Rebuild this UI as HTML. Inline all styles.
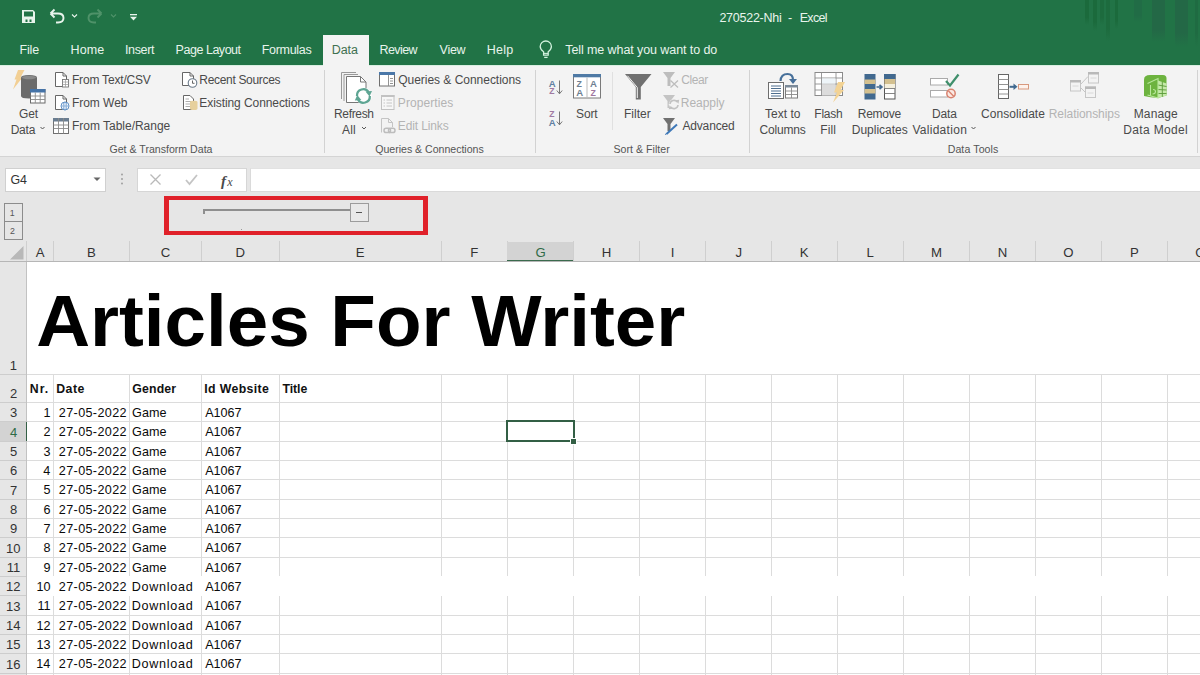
<!DOCTYPE html>
<html><head><meta charset="utf-8">
<style>
*{margin:0;padding:0}
html,body{width:1200px;height:675px;overflow:hidden;background:#fff;font-family:"Liberation Sans",sans-serif}
.a{position:absolute}
.t{position:absolute;white-space:nowrap}
</style></head><body>
<div class="a" style="left:0px;top:0px;width:1200px;height:65px;background:#217346;"></div>
<div class="a" style="left:1085px;top:0px;width:3.5px;height:25px;background:linear-gradient(#1b6a3c 70%,#217346);"></div>
<div class="a" style="left:1092.7px;top:0px;width:4px;height:31px;background:linear-gradient(#1b6a3c 70%,#217346);"></div>
<div class="a" style="left:1100px;top:0px;width:3.6px;height:25px;background:linear-gradient(#1d6b3e 70%,#217346);"></div>
<div class="a" style="left:1106.3px;top:0px;width:3.6px;height:41px;background:linear-gradient(#1d6b3e 70%,#217346);"></div>
<div class="a" style="left:1114.6px;top:0px;width:3.6px;height:29px;background:linear-gradient(#1b6a3c 70%,#217346);"></div>
<div class="a" style="left:1133.5px;top:0px;width:8px;height:22px;background:linear-gradient(#216c46 70%,#217346);"></div>
<div class="a" style="left:1152px;top:0px;width:12.6px;height:42px;background:linear-gradient(#236846 70%,#217346);"></div>
<div class="a" style="left:1175px;top:0px;width:12.5px;height:47px;background:linear-gradient(#236846 70%,#217346);"></div>
<div class="a" style="left:1194.8px;top:0px;width:3.6px;height:47px;background:linear-gradient(#1f6b42 70%,#217346);"></div>
<div class="t" style="left:719.38px;top:12.00px;font-size:12.50px;line-height:12.50px;color:#e8f4ec;letter-spacing:-0.250px;">270522-Nhi</div>
<div class="t" style="left:788.00px;top:12.00px;font-size:12.50px;line-height:12.50px;color:#e8f4ec;">-</div>
<div class="t" style="left:799.70px;top:12.00px;font-size:12.50px;line-height:12.50px;color:#e8f4ec;letter-spacing:-0.663px;">Excel</div>
<div class="a" style="left:323px;top:35px;width:46px;height:30px;background:#f3f3f3;"></div>
<div class="t" style="left:19.40px;top:44.00px;font-size:12.50px;line-height:12.50px;color:#e8f4ec;letter-spacing:-0.142px;">File</div>
<div class="t" style="left:70.60px;top:44.00px;font-size:12.50px;line-height:12.50px;color:#e8f4ec;letter-spacing:0.083px;">Home</div>
<div class="t" style="left:124.88px;top:44.00px;font-size:12.50px;line-height:12.50px;color:#e8f4ec;letter-spacing:-0.320px;">Insert</div>
<div class="t" style="left:175.60px;top:44.00px;font-size:12.50px;line-height:12.50px;color:#e8f4ec;letter-spacing:-0.472px;">Page Layout</div>
<div class="t" style="left:261.80px;top:44.00px;font-size:12.50px;line-height:12.50px;color:#e8f4ec;letter-spacing:-0.318px;">Formulas</div>
<div class="t" style="left:379.50px;top:44.00px;font-size:12.50px;line-height:12.50px;color:#e8f4ec;letter-spacing:-0.580px;">Review</div>
<div class="t" style="left:439.57px;top:44.00px;font-size:12.50px;line-height:12.50px;color:#e8f4ec;letter-spacing:-0.283px;">View</div>
<div class="t" style="left:486.80px;top:44.00px;font-size:12.50px;line-height:12.50px;color:#e8f4ec;letter-spacing:0.250px;">Help</div>
<div class="t" style="left:565.25px;top:44.00px;font-size:12.50px;line-height:12.50px;color:#e8f4ec;letter-spacing:-0.088px;">Tell me what you want to do</div>
<div class="t" style="left:331.80px;top:44.00px;font-size:12.50px;line-height:12.50px;color:#3f7050;letter-spacing:-0.100px;">Data</div>
<div class="a" style="left:0px;top:65px;width:1200px;height:92px;background:#f3f3f3;"></div>
<div class="a" style="left:0px;top:65px;width:323px;height:1px;background:#d9eee1;"></div>
<div class="a" style="left:369px;top:65px;width:831px;height:1px;background:#d9eee1;"></div>
<div class="a" style="left:0px;top:156px;width:1200px;height:1px;background:#d4d4d4;"></div>
<div class="a" style="left:324px;top:70px;width:1px;height:83px;background:#d2d2d2;"></div>
<div class="a" style="left:535px;top:70px;width:1px;height:83px;background:#d2d2d2;"></div>
<div class="a" style="left:749px;top:70px;width:1px;height:83px;background:#d2d2d2;"></div>
<div class="a" style="left:1197px;top:70px;width:1px;height:83px;background:#d2d2d2;"></div>
<div class="a" style="left:612px;top:72px;width:1px;height:58px;background:#e0e0e0;"></div>
<div class="t" style="left:18.90px;top:108.00px;font-size:12.00px;line-height:12.00px;color:#4a4a4a;letter-spacing:-0.050px;">Get</div>
<div class="t" style="left:10.64px;top:124.00px;font-size:12.00px;line-height:12.00px;color:#4a4a4a;letter-spacing:-0.193px;">Data</div>
<div class="t" style="left:71.94px;top:74.00px;font-size:12.00px;line-height:12.00px;color:#4a4a4a;letter-spacing:-0.187px;">From Text/CSV</div>
<div class="t" style="left:71.94px;top:97.00px;font-size:12.00px;line-height:12.00px;color:#4a4a4a;letter-spacing:-0.037px;">From Web</div>
<div class="t" style="left:71.94px;top:120.00px;font-size:12.00px;line-height:12.00px;color:#4a4a4a;letter-spacing:-0.011px;">From Table/Range</div>
<div class="t" style="left:199.34px;top:74.00px;font-size:12.00px;line-height:12.00px;color:#4a4a4a;letter-spacing:-0.322px;">Recent Sources</div>
<div class="t" style="left:199.34px;top:97.00px;font-size:12.00px;line-height:12.00px;color:#4a4a4a;letter-spacing:-0.081px;">Existing Connections</div>
<div class="t" style="left:109.47px;top:144.00px;font-size:10.60px;line-height:10.60px;color:#555;letter-spacing:-0.000px;">Get &amp; Transform Data</div>
<div class="t" style="left:334.04px;top:108.00px;font-size:12.00px;line-height:12.00px;color:#4a4a4a;letter-spacing:-0.337px;">Refresh</div>
<div class="t" style="left:342.00px;top:124.00px;font-size:12.00px;line-height:12.00px;color:#4a4a4a;letter-spacing:0.200px;">All</div>
<div class="t" style="left:398.20px;top:74.00px;font-size:12.00px;line-height:12.00px;color:#4a4a4a;letter-spacing:-0.024px;">Queries &amp; Connections</div>
<div class="t" style="left:397.84px;top:97.00px;font-size:12.00px;line-height:12.00px;color:#b4b4b4;letter-spacing:0.069px;">Properties</div>
<div class="t" style="left:397.84px;top:120.00px;font-size:12.00px;line-height:12.00px;color:#b4b4b4;letter-spacing:-0.127px;">Edit Links</div>
<div class="t" style="left:375.27px;top:144.00px;font-size:10.60px;line-height:10.60px;color:#555;letter-spacing:-0.026px;">Queries &amp; Connections</div>
<div class="t" style="left:576.10px;top:108.00px;font-size:12.00px;line-height:12.00px;color:#4a4a4a;letter-spacing:-0.187px;">Sort</div>
<div class="t" style="left:623.94px;top:108.00px;font-size:12.00px;line-height:12.00px;color:#4a4a4a;letter-spacing:0.028px;">Filter</div>
<div class="t" style="left:681.20px;top:74.00px;font-size:12.00px;line-height:12.00px;color:#b4b4b4;letter-spacing:-0.390px;">Clear</div>
<div class="t" style="left:680.84px;top:97.00px;font-size:12.00px;line-height:12.00px;color:#b4b4b4;letter-spacing:-0.047px;">Reapply</div>
<div class="t" style="left:682.40px;top:120.00px;font-size:12.00px;line-height:12.00px;color:#4a4a4a;letter-spacing:-0.151px;">Advanced</div>
<div class="t" style="left:613.47px;top:144.00px;font-size:10.60px;line-height:10.60px;color:#555;letter-spacing:0.031px;">Sort &amp; Filter</div>
<div class="t" style="left:765.06px;top:108.00px;font-size:12.00px;line-height:12.00px;color:#4a4a4a;letter-spacing:0.003px;">Text to</div>
<div class="t" style="left:759.40px;top:124.00px;font-size:12.00px;line-height:12.00px;color:#4a4a4a;letter-spacing:-0.170px;">Columns</div>
<div class="t" style="left:814.34px;top:108.00px;font-size:12.00px;line-height:12.00px;color:#4a4a4a;letter-spacing:-0.225px;">Flash</div>
<div class="t" style="left:820.34px;top:124.00px;font-size:12.00px;line-height:12.00px;color:#4a4a4a;letter-spacing:0.107px;">Fill</div>
<div class="t" style="left:857.74px;top:108.00px;font-size:12.00px;line-height:12.00px;color:#4a4a4a;letter-spacing:-0.240px;">Remove</div>
<div class="t" style="left:851.74px;top:124.00px;font-size:12.00px;line-height:12.00px;color:#4a4a4a;letter-spacing:-0.000px;">Duplicates</div>
<div class="t" style="left:932.04px;top:108.00px;font-size:12.00px;line-height:12.00px;color:#4a4a4a;letter-spacing:-0.160px;">Data</div>
<div class="t" style="left:912.38px;top:124.00px;font-size:12.00px;line-height:12.00px;color:#4a4a4a;letter-spacing:0.291px;">Validation</div>
<div class="t" style="left:981.10px;top:108.00px;font-size:12.00px;line-height:12.00px;color:#4a4a4a;letter-spacing:0.044px;">Consolidate</div>
<div class="t" style="left:1048.74px;top:108.00px;font-size:12.00px;line-height:12.00px;color:#b4b4b4;letter-spacing:-0.072px;">Relationships</div>
<div class="t" style="left:1133.74px;top:108.00px;font-size:12.00px;line-height:12.00px;color:#4a4a4a;letter-spacing:0.124px;">Manage</div>
<div class="t" style="left:1123.34px;top:124.00px;font-size:12.00px;line-height:12.00px;color:#4a4a4a;letter-spacing:0.340px;">Data Model</div>
<div class="t" style="left:947.65px;top:144.00px;font-size:10.60px;line-height:10.60px;color:#555;letter-spacing:0.094px;">Data Tools</div>
<div class="a" style="left:0px;top:157px;width:1200px;height:85px;background:#e6e6e6;"></div>
<div class="a" style="left:5px;top:168px;width:101px;height:24px;background:#fff;border:1px solid #d0d0d0;box-sizing:border-box"></div>
<div class="t" style="left:10.38px;top:174.00px;font-size:12.40px;line-height:12.40px;color:#333;">G4</div>
<div class="a" style="left:137px;top:168px;width:110px;height:24px;background:#fff;border:1px solid #d6d6d6;box-sizing:border-box"></div>
<div class="a" style="left:250px;top:168px;width:960px;height:24px;background:#fff;border:1px solid #dadada;border-top-color:#e2e2e2;box-sizing:border-box"></div>
<div class="a" style="left:4px;top:203px;width:19px;height:19px;background:#e6e6e6;border:1px solid #8c8c8c;box-sizing:border-box"></div>
<div class="a" style="left:4px;top:221px;width:19px;height:19px;background:#e6e6e6;border:1px solid #8c8c8c;box-sizing:border-box"></div>
<div class="t" style="left:9.80px;top:209.00px;font-size:8.80px;line-height:8.80px;color:#555;">1</div>
<div class="t" style="left:10.06px;top:227.00px;font-size:8.80px;line-height:8.80px;color:#555;">2</div>
<div class="a" style="left:0px;top:242px;width:1200px;height:19px;background:#e6e6e6;"></div>
<div class="a" style="left:0px;top:261px;width:1200px;height:1px;background:#b6b6b6;"></div>
<div class="a" style="left:53px;top:240.5px;width:1px;height:20.5px;background:#cfcfcf;"></div>
<div class="a" style="left:129px;top:240.5px;width:1px;height:20.5px;background:#cfcfcf;"></div>
<div class="a" style="left:201px;top:240.5px;width:1px;height:20.5px;background:#cfcfcf;"></div>
<div class="a" style="left:279px;top:240.5px;width:1px;height:20.5px;background:#cfcfcf;"></div>
<div class="a" style="left:441px;top:240.5px;width:1px;height:20.5px;background:#cfcfcf;"></div>
<div class="a" style="left:507px;top:240.5px;width:1px;height:20.5px;background:#cfcfcf;"></div>
<div class="a" style="left:507px;top:242px;width:66px;height:19px;background:#d3d3d3;"></div>
<div class="a" style="left:507px;top:259.5px;width:66px;height:1.5px;background:#3a6a4d;"></div>
<div class="a" style="left:573px;top:240.5px;width:1px;height:20.5px;background:#cfcfcf;"></div>
<div class="a" style="left:639px;top:240.5px;width:1px;height:20.5px;background:#cfcfcf;"></div>
<div class="a" style="left:705px;top:240.5px;width:1px;height:20.5px;background:#cfcfcf;"></div>
<div class="a" style="left:771px;top:240.5px;width:1px;height:20.5px;background:#cfcfcf;"></div>
<div class="a" style="left:837px;top:240.5px;width:1px;height:20.5px;background:#cfcfcf;"></div>
<div class="a" style="left:903px;top:240.5px;width:1px;height:20.5px;background:#cfcfcf;"></div>
<div class="a" style="left:969px;top:240.5px;width:1px;height:20.5px;background:#cfcfcf;"></div>
<div class="a" style="left:1035px;top:240.5px;width:1px;height:20.5px;background:#cfcfcf;"></div>
<div class="a" style="left:1101px;top:240.5px;width:1px;height:20.5px;background:#cfcfcf;"></div>
<div class="a" style="left:1167px;top:240.5px;width:1px;height:20.5px;background:#cfcfcf;"></div>
<div class="a" style="left:1233px;top:240.5px;width:1px;height:20.5px;background:#cfcfcf;"></div>
<div class="t" style="left:35.64px;top:246.00px;font-size:13.20px;line-height:13.20px;color:#333;">A</div>
<div class="t" style="left:86.88px;top:246.00px;font-size:13.20px;line-height:13.20px;color:#333;">B</div>
<div class="t" style="left:160.68px;top:246.00px;font-size:13.20px;line-height:13.20px;color:#333;">C</div>
<div class="t" style="left:235.48px;top:246.00px;font-size:13.20px;line-height:13.20px;color:#333;">D</div>
<div class="t" style="left:355.81px;top:246.00px;font-size:13.20px;line-height:13.20px;color:#333;">E</div>
<div class="t" style="left:470.21px;top:246.00px;font-size:13.20px;line-height:13.20px;color:#333;">F</div>
<div class="t" style="left:535.55px;top:246.00px;font-size:13.20px;line-height:13.20px;color:#2f6b47;">G</div>
<div class="t" style="left:601.75px;top:246.00px;font-size:13.20px;line-height:13.20px;color:#333;">H</div>
<div class="t" style="left:670.65px;top:246.00px;font-size:13.20px;line-height:13.20px;color:#333;">I</div>
<div class="t" style="left:735.53px;top:246.00px;font-size:13.20px;line-height:13.20px;color:#333;">J</div>
<div class="t" style="left:799.68px;top:246.00px;font-size:13.20px;line-height:13.20px;color:#333;">K</div>
<div class="t" style="left:866.54px;top:246.00px;font-size:13.20px;line-height:13.20px;color:#333;">L</div>
<div class="t" style="left:931.02px;top:246.00px;font-size:13.20px;line-height:13.20px;color:#333;">M</div>
<div class="t" style="left:997.75px;top:246.00px;font-size:13.20px;line-height:13.20px;color:#333;">N</div>
<div class="t" style="left:1063.35px;top:246.00px;font-size:13.20px;line-height:13.20px;color:#333;">O</div>
<div class="t" style="left:1129.88px;top:246.00px;font-size:13.20px;line-height:13.20px;color:#333;">P</div>
<div class="t" style="left:1195.35px;top:246.00px;font-size:13.20px;line-height:13.20px;color:#333;">Q</div>
<div class="a" style="left:26px;top:240.5px;width:1px;height:20.5px;background:#cfcfcf;"></div>
<svg class="a" style="left:0;top:242px" width="26" height="19"><path d="M10 17.5 H23.5 V4 Z" fill="#b8b8b8"/></svg>
<div class="a" style="left:27px;top:262px;width:1173px;height:413px;background:#fff;"></div>
<div class="a" style="left:0px;top:262px;width:26px;height:413px;background:#e6e6e6;"></div>
<div class="a" style="left:26px;top:262px;width:1px;height:413px;background:#c2c2c2;"></div>
<div class="a" style="left:0px;top:374px;width:26px;height:1px;background:#cdcdcd;"></div>
<div class="a" style="left:27px;top:374px;width:1173px;height:1px;background:#dcdcdc;"></div>
<div class="a" style="left:0px;top:402px;width:26px;height:1px;background:#cdcdcd;"></div>
<div class="a" style="left:27px;top:402px;width:1173px;height:1px;background:#dcdcdc;"></div>
<div class="a" style="left:0px;top:421px;width:26px;height:1px;background:#cdcdcd;"></div>
<div class="a" style="left:27px;top:421px;width:1173px;height:1px;background:#dcdcdc;"></div>
<div class="a" style="left:0px;top:441px;width:26px;height:1px;background:#cdcdcd;"></div>
<div class="a" style="left:27px;top:441px;width:1173px;height:1px;background:#dcdcdc;"></div>
<div class="a" style="left:0px;top:460px;width:26px;height:1px;background:#cdcdcd;"></div>
<div class="a" style="left:27px;top:460px;width:1173px;height:1px;background:#dcdcdc;"></div>
<div class="a" style="left:0px;top:479px;width:26px;height:1px;background:#cdcdcd;"></div>
<div class="a" style="left:27px;top:479px;width:1173px;height:1px;background:#dcdcdc;"></div>
<div class="a" style="left:0px;top:499px;width:26px;height:1px;background:#cdcdcd;"></div>
<div class="a" style="left:27px;top:499px;width:1173px;height:1px;background:#dcdcdc;"></div>
<div class="a" style="left:0px;top:518px;width:26px;height:1px;background:#cdcdcd;"></div>
<div class="a" style="left:27px;top:518px;width:1173px;height:1px;background:#dcdcdc;"></div>
<div class="a" style="left:0px;top:537px;width:26px;height:1px;background:#cdcdcd;"></div>
<div class="a" style="left:27px;top:537px;width:1173px;height:1px;background:#dcdcdc;"></div>
<div class="a" style="left:0px;top:557px;width:26px;height:1px;background:#cdcdcd;"></div>
<div class="a" style="left:27px;top:557px;width:1173px;height:1px;background:#dcdcdc;"></div>
<div class="a" style="left:0px;top:576px;width:26px;height:1px;background:#cdcdcd;"></div>
<div class="a" style="left:27px;top:576px;width:1173px;height:1px;background:#dcdcdc;"></div>
<div class="a" style="left:0px;top:595px;width:26px;height:1px;background:#cdcdcd;"></div>
<div class="a" style="left:27px;top:595px;width:1173px;height:1px;background:#dcdcdc;"></div>
<div class="a" style="left:0px;top:615px;width:26px;height:1px;background:#cdcdcd;"></div>
<div class="a" style="left:27px;top:615px;width:1173px;height:1px;background:#dcdcdc;"></div>
<div class="a" style="left:0px;top:634px;width:26px;height:1px;background:#cdcdcd;"></div>
<div class="a" style="left:27px;top:634px;width:1173px;height:1px;background:#dcdcdc;"></div>
<div class="a" style="left:0px;top:653px;width:26px;height:1px;background:#cdcdcd;"></div>
<div class="a" style="left:27px;top:653px;width:1173px;height:1px;background:#dcdcdc;"></div>
<div class="a" style="left:0px;top:673px;width:26px;height:1px;background:#cdcdcd;"></div>
<div class="a" style="left:27px;top:673px;width:1173px;height:1px;background:#dcdcdc;"></div>
<div class="a" style="left:53px;top:374px;width:1px;height:301px;background:#dcdcdc;"></div>
<div class="a" style="left:129px;top:374px;width:1px;height:301px;background:#dcdcdc;"></div>
<div class="a" style="left:201px;top:374px;width:1px;height:301px;background:#dcdcdc;"></div>
<div class="a" style="left:279px;top:374px;width:1px;height:301px;background:#dcdcdc;"></div>
<div class="a" style="left:441px;top:374px;width:1px;height:301px;background:#dcdcdc;"></div>
<div class="a" style="left:507px;top:374px;width:1px;height:301px;background:#dcdcdc;"></div>
<div class="a" style="left:573px;top:374px;width:1px;height:301px;background:#dcdcdc;"></div>
<div class="a" style="left:639px;top:374px;width:1px;height:301px;background:#dcdcdc;"></div>
<div class="a" style="left:705px;top:374px;width:1px;height:301px;background:#dcdcdc;"></div>
<div class="a" style="left:771px;top:374px;width:1px;height:301px;background:#dcdcdc;"></div>
<div class="a" style="left:837px;top:374px;width:1px;height:301px;background:#dcdcdc;"></div>
<div class="a" style="left:903px;top:374px;width:1px;height:301px;background:#dcdcdc;"></div>
<div class="a" style="left:969px;top:374px;width:1px;height:301px;background:#dcdcdc;"></div>
<div class="a" style="left:1035px;top:374px;width:1px;height:301px;background:#dcdcdc;"></div>
<div class="a" style="left:1101px;top:374px;width:1px;height:301px;background:#dcdcdc;"></div>
<div class="a" style="left:1167px;top:374px;width:1px;height:301px;background:#dcdcdc;"></div>
<div class="a" style="left:27px;top:576px;width:1173px;height:20px;background:#fff;"></div>
<div class="a" style="left:0px;top:422px;width:26px;height:19px;background:#d3d3d3;"></div>
<div class="a" style="left:25.5px;top:422px;width:1.5px;height:19px;background:#335f45;"></div>
<div class="t" style="left:9.77px;top:359.00px;font-size:13.00px;line-height:13.00px;color:#333;">1</div>
<div class="t" style="left:9.96px;top:387.00px;font-size:13.00px;line-height:13.00px;color:#333;">2</div>
<div class="t" style="left:10.03px;top:406.00px;font-size:13.00px;line-height:13.00px;color:#333;">3</div>
<div class="t" style="left:10.03px;top:426.00px;font-size:13.00px;line-height:13.00px;color:#2f6b47;">4</div>
<div class="t" style="left:9.96px;top:445.00px;font-size:13.00px;line-height:13.00px;color:#333;">5</div>
<div class="t" style="left:9.96px;top:464.00px;font-size:13.00px;line-height:13.00px;color:#333;">6</div>
<div class="t" style="left:9.96px;top:484.00px;font-size:13.00px;line-height:13.00px;color:#333;">7</div>
<div class="t" style="left:10.03px;top:503.00px;font-size:13.00px;line-height:13.00px;color:#333;">8</div>
<div class="t" style="left:9.96px;top:522.00px;font-size:13.00px;line-height:13.00px;color:#333;">9</div>
<div class="t" style="left:6.06px;top:542.00px;font-size:13.00px;line-height:13.00px;color:#333;">10</div>
<div class="t" style="left:6.64px;top:561.00px;font-size:13.00px;line-height:13.00px;color:#333;">11</div>
<div class="t" style="left:6.12px;top:580.00px;font-size:13.00px;line-height:13.00px;color:#333;">12</div>
<div class="t" style="left:6.12px;top:600.00px;font-size:13.00px;line-height:13.00px;color:#333;">13</div>
<div class="t" style="left:5.99px;top:619.00px;font-size:13.00px;line-height:13.00px;color:#333;">14</div>
<div class="t" style="left:6.06px;top:638.00px;font-size:13.00px;line-height:13.00px;color:#333;">15</div>
<div class="t" style="left:6.12px;top:658.00px;font-size:13.00px;line-height:13.00px;color:#333;">16</div>
<div class="t" style="left:36.16px;top:283.00px;font-size:74.60px;line-height:74.60px;color:#000;letter-spacing:-0.021px;font-weight:bold;transform:scaleY(0.9750);transform-origin:0 63.00px;">Articles For Writer</div>
<div class="t" style="left:29.64px;top:383.00px;font-size:12.30px;line-height:12.30px;color:#111;letter-spacing:1.120px;font-weight:bold;">Nr.</div>
<div class="t" style="left:56.14px;top:383.00px;font-size:12.30px;line-height:12.30px;color:#111;letter-spacing:0.554px;font-weight:bold;">Date</div>
<div class="t" style="left:132.21px;top:383.00px;font-size:12.30px;line-height:12.30px;color:#111;letter-spacing:0.173px;font-weight:bold;">Gender</div>
<div class="t" style="left:204.34px;top:383.00px;font-size:12.30px;line-height:12.30px;color:#111;letter-spacing:0.364px;font-weight:bold;">Id Website</div>
<div class="t" style="left:282.58px;top:383.00px;font-size:12.30px;line-height:12.30px;color:#111;letter-spacing:-0.094px;font-weight:bold;">Title</div>
<div class="t" style="left:43.57px;top:407.00px;font-size:12.60px;line-height:12.60px;color:#0a0a0a;">1</div>
<div class="t" style="left:58.87px;top:407.00px;font-size:12.60px;line-height:12.60px;color:#0a0a0a;letter-spacing:0.361px;">27-05-2022</div>
<div class="t" style="left:132.07px;top:407.00px;font-size:12.60px;line-height:12.60px;color:#0a0a0a;letter-spacing:0.054px;">Game</div>
<div class="t" style="left:205.20px;top:407.00px;font-size:12.60px;line-height:12.60px;color:#0a0a0a;letter-spacing:-0.027px;">A1067</div>
<div class="t" style="left:43.57px;top:426.00px;font-size:12.60px;line-height:12.60px;color:#0a0a0a;">2</div>
<div class="t" style="left:58.87px;top:426.00px;font-size:12.60px;line-height:12.60px;color:#0a0a0a;letter-spacing:0.361px;">27-05-2022</div>
<div class="t" style="left:132.07px;top:426.00px;font-size:12.60px;line-height:12.60px;color:#0a0a0a;letter-spacing:0.054px;">Game</div>
<div class="t" style="left:205.20px;top:426.00px;font-size:12.60px;line-height:12.60px;color:#0a0a0a;letter-spacing:-0.027px;">A1067</div>
<div class="t" style="left:43.57px;top:446.00px;font-size:12.60px;line-height:12.60px;color:#0a0a0a;">3</div>
<div class="t" style="left:58.87px;top:446.00px;font-size:12.60px;line-height:12.60px;color:#0a0a0a;letter-spacing:0.361px;">27-05-2022</div>
<div class="t" style="left:132.07px;top:446.00px;font-size:12.60px;line-height:12.60px;color:#0a0a0a;letter-spacing:0.054px;">Game</div>
<div class="t" style="left:205.20px;top:446.00px;font-size:12.60px;line-height:12.60px;color:#0a0a0a;letter-spacing:-0.027px;">A1067</div>
<div class="t" style="left:43.32px;top:465.00px;font-size:12.60px;line-height:12.60px;color:#0a0a0a;">4</div>
<div class="t" style="left:58.87px;top:465.00px;font-size:12.60px;line-height:12.60px;color:#0a0a0a;letter-spacing:0.361px;">27-05-2022</div>
<div class="t" style="left:132.07px;top:465.00px;font-size:12.60px;line-height:12.60px;color:#0a0a0a;letter-spacing:0.054px;">Game</div>
<div class="t" style="left:205.20px;top:465.00px;font-size:12.60px;line-height:12.60px;color:#0a0a0a;letter-spacing:-0.027px;">A1067</div>
<div class="t" style="left:43.45px;top:484.00px;font-size:12.60px;line-height:12.60px;color:#0a0a0a;">5</div>
<div class="t" style="left:58.87px;top:484.00px;font-size:12.60px;line-height:12.60px;color:#0a0a0a;letter-spacing:0.361px;">27-05-2022</div>
<div class="t" style="left:132.07px;top:484.00px;font-size:12.60px;line-height:12.60px;color:#0a0a0a;letter-spacing:0.054px;">Game</div>
<div class="t" style="left:205.20px;top:484.00px;font-size:12.60px;line-height:12.60px;color:#0a0a0a;letter-spacing:-0.027px;">A1067</div>
<div class="t" style="left:43.57px;top:504.00px;font-size:12.60px;line-height:12.60px;color:#0a0a0a;">6</div>
<div class="t" style="left:58.87px;top:504.00px;font-size:12.60px;line-height:12.60px;color:#0a0a0a;letter-spacing:0.361px;">27-05-2022</div>
<div class="t" style="left:132.07px;top:504.00px;font-size:12.60px;line-height:12.60px;color:#0a0a0a;letter-spacing:0.054px;">Game</div>
<div class="t" style="left:205.20px;top:504.00px;font-size:12.60px;line-height:12.60px;color:#0a0a0a;letter-spacing:-0.027px;">A1067</div>
<div class="t" style="left:43.57px;top:523.00px;font-size:12.60px;line-height:12.60px;color:#0a0a0a;">7</div>
<div class="t" style="left:58.87px;top:523.00px;font-size:12.60px;line-height:12.60px;color:#0a0a0a;letter-spacing:0.361px;">27-05-2022</div>
<div class="t" style="left:132.07px;top:523.00px;font-size:12.60px;line-height:12.60px;color:#0a0a0a;letter-spacing:0.054px;">Game</div>
<div class="t" style="left:205.20px;top:523.00px;font-size:12.60px;line-height:12.60px;color:#0a0a0a;letter-spacing:-0.027px;">A1067</div>
<div class="t" style="left:43.57px;top:542.00px;font-size:12.60px;line-height:12.60px;color:#0a0a0a;">8</div>
<div class="t" style="left:58.87px;top:542.00px;font-size:12.60px;line-height:12.60px;color:#0a0a0a;letter-spacing:0.361px;">27-05-2022</div>
<div class="t" style="left:132.07px;top:542.00px;font-size:12.60px;line-height:12.60px;color:#0a0a0a;letter-spacing:0.054px;">Game</div>
<div class="t" style="left:205.20px;top:542.00px;font-size:12.60px;line-height:12.60px;color:#0a0a0a;letter-spacing:-0.027px;">A1067</div>
<div class="t" style="left:43.57px;top:562.00px;font-size:12.60px;line-height:12.60px;color:#0a0a0a;">9</div>
<div class="t" style="left:58.87px;top:562.00px;font-size:12.60px;line-height:12.60px;color:#0a0a0a;letter-spacing:0.361px;">27-05-2022</div>
<div class="t" style="left:132.07px;top:562.00px;font-size:12.60px;line-height:12.60px;color:#0a0a0a;letter-spacing:0.054px;">Game</div>
<div class="t" style="left:205.20px;top:562.00px;font-size:12.60px;line-height:12.60px;color:#0a0a0a;letter-spacing:-0.027px;">A1067</div>
<div class="t" style="left:36.39px;top:581.00px;font-size:12.60px;line-height:12.60px;color:#0a0a0a;">10</div>
<div class="t" style="left:58.87px;top:581.00px;font-size:12.60px;line-height:12.60px;color:#0a0a0a;letter-spacing:0.361px;">27-05-2022</div>
<div class="t" style="left:131.69px;top:581.00px;font-size:12.60px;line-height:12.60px;color:#0a0a0a;letter-spacing:0.731px;">Download</div>
<div class="t" style="left:205.20px;top:581.00px;font-size:12.60px;line-height:12.60px;color:#0a0a0a;letter-spacing:-0.027px;">A1067</div>
<div class="t" style="left:37.53px;top:600.00px;font-size:12.60px;line-height:12.60px;color:#0a0a0a;">11</div>
<div class="t" style="left:58.87px;top:600.00px;font-size:12.60px;line-height:12.60px;color:#0a0a0a;letter-spacing:0.361px;">27-05-2022</div>
<div class="t" style="left:131.69px;top:600.00px;font-size:12.60px;line-height:12.60px;color:#0a0a0a;letter-spacing:0.731px;">Download</div>
<div class="t" style="left:205.20px;top:600.00px;font-size:12.60px;line-height:12.60px;color:#0a0a0a;letter-spacing:-0.027px;">A1067</div>
<div class="t" style="left:36.52px;top:620.00px;font-size:12.60px;line-height:12.60px;color:#0a0a0a;">12</div>
<div class="t" style="left:58.87px;top:620.00px;font-size:12.60px;line-height:12.60px;color:#0a0a0a;letter-spacing:0.361px;">27-05-2022</div>
<div class="t" style="left:131.69px;top:620.00px;font-size:12.60px;line-height:12.60px;color:#0a0a0a;letter-spacing:0.731px;">Download</div>
<div class="t" style="left:205.20px;top:620.00px;font-size:12.60px;line-height:12.60px;color:#0a0a0a;letter-spacing:-0.027px;">A1067</div>
<div class="t" style="left:36.52px;top:639.00px;font-size:12.60px;line-height:12.60px;color:#0a0a0a;">13</div>
<div class="t" style="left:58.87px;top:639.00px;font-size:12.60px;line-height:12.60px;color:#0a0a0a;letter-spacing:0.361px;">27-05-2022</div>
<div class="t" style="left:131.69px;top:639.00px;font-size:12.60px;line-height:12.60px;color:#0a0a0a;letter-spacing:0.731px;">Download</div>
<div class="t" style="left:205.20px;top:639.00px;font-size:12.60px;line-height:12.60px;color:#0a0a0a;letter-spacing:-0.027px;">A1067</div>
<div class="t" style="left:36.27px;top:658.00px;font-size:12.60px;line-height:12.60px;color:#0a0a0a;">14</div>
<div class="t" style="left:58.87px;top:658.00px;font-size:12.60px;line-height:12.60px;color:#0a0a0a;letter-spacing:0.361px;">27-05-2022</div>
<div class="t" style="left:131.69px;top:658.00px;font-size:12.60px;line-height:12.60px;color:#0a0a0a;letter-spacing:0.731px;">Download</div>
<div class="t" style="left:205.20px;top:658.00px;font-size:12.60px;line-height:12.60px;color:#0a0a0a;letter-spacing:-0.027px;">A1067</div>
<div class="a" style="left:506px;top:420px;width:69px;height:22px;background:transparent;border:2px solid #335f45;box-sizing:border-box"></div>
<div class="a" style="left:571px;top:438.5px;width:5px;height:5px;background:#335f45;outline:1px solid #fff"></div>
<div class="a" style="left:164px;top:196.2px;width:264px;height:38.6px;background:transparent;border:4.6px solid #e0212a;border-left-width:5px;border-right-width:5px;box-sizing:border-box"></div>
<div class="a" style="left:203px;top:209.4px;width:148px;height:1.3px;background:#8f8f8f;"></div>
<div class="a" style="left:203px;top:209.4px;width:1.8px;height:4.6px;background:#8f8f8f;"></div>
<div class="a" style="left:350px;top:203px;width:18.5px;height:18.5px;background:#e9e9e9;border:1px solid #9c9c9c;box-sizing:border-box"></div>
<div class="a" style="left:356px;top:211.5px;width:6px;height:1.6px;background:#555;"></div>
<div class="a" style="left:240.5px;top:228.5px;width:1.5px;height:1.5px;background:#999;"></div>
<svg class="a" style="left:0;top:0" width="1200" height="245" viewBox="0 0 1200 245">
<!-- QAT -->
<path d="M22 10 H33 L35 12 V23 H22 Z" fill="#e8f4ec"/>
<rect x="24" y="11.5" width="9" height="5" fill="#217346"/>
<rect x="25.5" y="19.5" width="2" height="2.5" fill="#217346"/>
<rect x="29.5" y="19.5" width="2" height="2.5" fill="#217346"/>
<path d="M50.5 13.5 L54.5 9.5 M50.5 13.5 L54.5 17.5 M50.5 13.5 H58 Q63.5 13.5 63.5 18 Q63.5 22.5 58 22.5 H56" fill="none" stroke="#e8f4ec" stroke-width="1.9"/>
<path d="M72 14.5 L74.5 17 L77 14.5" fill="none" stroke="#e8f4ec" stroke-width="1.1"/>
<path d="M101.5 13.5 L97.5 9.5 M101.5 13.5 L97.5 17.5 M101.5 13.5 H94 Q88.5 13.5 88.5 18 Q88.5 22.5 94 22.5 H96" fill="none" stroke="#4f9269" stroke-width="1.9"/>
<path d="M111 14.5 L113.5 17 L116 14.5" fill="none" stroke="#4f9269" stroke-width="1.1"/>
<rect x="130" y="14" width="7" height="1.3" fill="#e8f4ec"/>
<path d="M130 16.8 H137 L133.5 20.5 Z" fill="#e8f4ec"/>
<!-- lightbulb -->
<path d="M543.6 55.2 V51.8 Q540.2 49.6 540.2 46.6 A5.6 5.6 0 0 1 551.4 46.6 Q551.4 49.6 548.2 51.8 V55.2 Z" fill="none" stroke="#d2f2de" stroke-width="1.3"/>
<path d="M543.8 53.4 H548" stroke="#d2f2de" stroke-width="1.1"/>
<path d="M544.2 57.4 H547.6" stroke="#d2f2de" stroke-width="1.3"/>
<!-- Get Data -->
<path d="M18 70 H24.5 L20.5 77.5 H22.5 L13 89.5 L16.5 79.5 H14.5 Z" fill="#f2cf94"/>
<path d="M21 77.5 Q21 75 29 75 Q37 75 37 77.5 V96 Q37 98.5 29 98.5 Q21 98.5 21 96 Z" fill="#6b6b6b"/>
<ellipse cx="29" cy="77.5" rx="7" ry="1.8" fill="#8a8a8a"/>
<rect x="30.5" y="89.5" width="14.5" height="13.5" fill="#fff" stroke="#6b6b6b" stroke-width="1"/>
<rect x="30" y="89" width="15.5" height="3.5" fill="#4573a7"/>
<path d="M30.5 96 H45 M30.5 99.5 H45 M35.3 92.5 V103 M40.2 92.5 V103" stroke="#8b8b8b" stroke-width="0.9"/>
<path d="M40.5 127 L42.5 129 L44.5 127" fill="none" stroke="#555" stroke-width="1"/>

<!-- From Text/CSV doc -->
<path d="M55.5 72.5 H63 L66.5 76 V86.5 H55.5 Z" fill="#fff" stroke="#666" stroke-width="1"/>
<path d="M63 72.5 V76 H66.5" fill="none" stroke="#666" stroke-width="1"/>
<rect x="62.5" y="79.5" width="6" height="7.5" fill="#fff" stroke="#777" stroke-width="0.9"/>
<path d="M62.5 82 H68.5 M62.5 84.5 H68.5 M65.5 79.5 V87" stroke="#9a9a9a" stroke-width="0.7"/>
<!-- From Web -->
<path d="M55.5 95.5 H63 L66.5 99 V109.5 H55.5 Z" fill="#fff" stroke="#666" stroke-width="1"/>
<path d="M63 95.5 V99 H66.5" fill="none" stroke="#666" stroke-width="1"/>
<circle cx="65" cy="106" r="4" fill="#fff" stroke="#4f86c0" stroke-width="0.9"/>
<path d="M61 106 H69 M65 102 V110" stroke="#6b9bd0" stroke-width="0.7"/>
<ellipse cx="65" cy="106" rx="1.8" ry="4" fill="none" stroke="#6b9bd0" stroke-width="0.7"/>
<!-- From Table/Range -->
<rect x="53.5" y="118.5" width="15" height="15" fill="#fff" stroke="#707070" stroke-width="1"/>
<rect x="53" y="118" width="16" height="3.5" fill="#6a7d90"/>
<path d="M53.5 125 H68.5 M53.5 128.5 H68.5 M58.5 118 V133.5 M63.5 118 V133.5" stroke="#8a8a8a" stroke-width="0.9"/>
<!-- Recent Sources -->
<path d="M182.5 72.5 H190 L193.5 76 V85.5 H182.5 Z" fill="#fff" stroke="#666" stroke-width="1"/>
<path d="M190 72.5 V76 H193.5" fill="none" stroke="#666" stroke-width="1"/>
<circle cx="192.5" cy="83" r="4.3" fill="#fff" stroke="#6b7a8a" stroke-width="1.1"/>
<path d="M192.5 80.5 V83.3 H194.5" fill="none" stroke="#555" stroke-width="0.9"/>
<!-- Existing Connections -->
<path d="M183.5 95.5 H190 L193.5 99 V109.5 H183.5 Z" fill="#fff" stroke="#666" stroke-width="1"/>
<path d="M185.5 99 H189 M185.5 101.5 H191 M185.5 104 H190 M185.5 106.5 H190" stroke="#999" stroke-width="0.8"/>
<path d="M190 102 Q190 100.8 193.8 100.8 Q197.5 100.8 197.5 102 V108.8 Q197.5 110 193.8 110 Q190 110 190 108.8 Z" fill="#e6d09c"/>

<!-- Refresh All -->
<path d="M341.5 72.5 H356 M341.5 72.5 V99" fill="none" stroke="#999" stroke-width="1"/>
<path d="M344 74.5 H358 M344 74.5 V101" fill="none" stroke="#999" stroke-width="1"/>
<path d="M346.5 76.5 H360.5 L366 82 V102.5 H346.5 Z" fill="#fff" stroke="#777" stroke-width="1"/>
<path d="M360.5 76.5 V82 H366" fill="none" stroke="#777" stroke-width="1"/>
<circle cx="363.5" cy="96" r="8.3" fill="#fff"/>
<path d="M357 96 A6.3 6.3 0 0 1 368.8 92.5" fill="none" stroke="#5ea593" stroke-width="2.3"/>
<path d="M369.8 96 A6.3 6.3 0 0 1 358 99.5" fill="none" stroke="#5ea593" stroke-width="2.3"/>
<path d="M365.5 91.5 L372 91 L369.5 96.5 Z" fill="#5ea593"/>
<path d="M361.3 100 L354.8 100.5 L357.3 95 Z" fill="#5ea593"/>
<path d="M362 127 L364 129 L366 127" fill="none" stroke="#555" stroke-width="1"/>
<!-- Queries & Connections -->
<rect x="379.5" y="72.5" width="15" height="13.5" fill="#fff" stroke="#707070" stroke-width="1"/>
<rect x="379" y="72" width="16" height="3" fill="#4a77a8"/>
<path d="M388.5 75 V86 M390 78.5 H393 M390 81 H393 M390 83.5 H393" stroke="#888" stroke-width="0.9"/>
<!-- Properties (disabled) -->
<rect x="381.5" y="95.5" width="12.5" height="14" fill="#f7f7f7" stroke="#c2c2c2" stroke-width="1"/>
<rect x="381" y="95" width="13.5" height="2" fill="#c2c2c2"/>
<path d="M383.5 100 H385 M386.5 100 H392 M383.5 103 H385 M386.5 103 H392 M383.5 106 H385 M386.5 106 H392" stroke="#c6c6c6" stroke-width="1"/>
<!-- Edit Links (disabled) -->
<path d="M381.5 132.5 V118.5 H388.5 L392.5 122.5 V127" fill="none" stroke="#c4c4c4" stroke-width="1"/>
<path d="M388.5 118.5 V122.5 H392.5" fill="none" stroke="#c4c4c4" stroke-width="1"/>
<rect x="384" y="128.3" width="6.5" height="4.2" rx="2.1" fill="none" stroke="#bdbdbd" stroke-width="1.5"/>
<rect x="388.5" y="128.3" width="6.5" height="4.2" rx="2.1" fill="none" stroke="#bdbdbd" stroke-width="1.5"/>
<!-- Sort A-Z -->
<text x="548.8" y="87" font-family="Liberation Sans" font-weight="bold" font-size="9.6" fill="#5f7fa2">A</text>
<text x="549.3" y="94.2" font-family="Liberation Sans" font-weight="bold" font-size="8.6" fill="#a07aa2">Z</text>
<path d="M559.5 80.5 V93.5 M556.8 90.5 L559.5 93.8 L562.2 90.5" fill="none" stroke="#6a6a6a" stroke-width="0.9"/>
<!-- Sort Z-A -->
<text x="549.3" y="117.2" font-family="Liberation Sans" font-weight="bold" font-size="8.6" fill="#a07aa2">Z</text>
<text x="548.8" y="125.6" font-family="Liberation Sans" font-weight="bold" font-size="9.6" fill="#5f7fa2">A</text>
<path d="M559.5 111.5 V124.5 M556.8 121.5 L559.5 124.8 L562.2 121.5" fill="none" stroke="#6a6a6a" stroke-width="0.9"/>
<!-- Sort box -->
<rect x="573.5" y="74.5" width="27" height="23.5" fill="#fff" stroke="#7a7a7a" stroke-width="1"/>
<rect x="573" y="74" width="28" height="3.3" fill="#4f7aa5"/>
<path d="M587 77.5 V98" stroke="#bbb" stroke-width="1"/>
<text x="576.6" y="86.6" font-family="Liberation Sans" font-weight="bold" font-size="8.8" fill="#6e7f92">Z</text>
<text x="576.2" y="95.9" font-family="Liberation Sans" font-weight="bold" font-size="9.6" fill="#6e7f92">A</text>
<text x="590" y="86.6" font-family="Liberation Sans" font-weight="bold" font-size="9.6" fill="#6e7f92">A</text>
<text x="590.6" y="95.9" font-family="Liberation Sans" font-weight="bold" font-size="8.8" fill="#9f77a1">Z</text>
<!-- Filter -->
<path d="M625 74 H651.5 L640.8 87 V99.5 H635.8 V87 Z" fill="#707070"/>
<path d="M627.5 75.8 L637.3 87.5 V98" fill="none" stroke="#f3f3f3" stroke-width="1"/>
<!-- Clear (disabled) -->
<path d="M663 72 H675 L670.5 78 V86 H667.5 V78 Z" fill="#bdbdbd"/>
<path d="M670.5 80.5 L678 87.5 M678 80.5 L670.5 87.5" stroke="#bdbdbd" stroke-width="1.3"/>
<!-- Reapply (disabled) -->
<path d="M663 95 H675 L670.5 101 V108 H667.5 V101 Z" fill="#c4c4c4"/>
<circle cx="674" cy="104.5" r="5.3" fill="#f3f3f3"/>
<path d="M670 104 A4 4 0 0 1 677.2 102" fill="none" stroke="#c2c2c2" stroke-width="1.6"/>
<path d="M678 105 A4 4 0 0 1 670.8 107" fill="none" stroke="#c2c2c2" stroke-width="1.6"/>
<path d="M675.3 100.2 L679.2 99.8 L678.5 103.8 Z" fill="#c2c2c2"/>
<path d="M672.7 108.8 L668.8 109.2 L669.5 105.2 Z" fill="#c2c2c2"/>
<!-- Advanced -->
<path d="M663 118 H675 L670.5 124 V131 H667.5 V124 Z" fill="#707070"/>
<path d="M666.5 134 L677 124.5" stroke="#3e78b8" stroke-width="2"/>
<path d="M665.5 135 L666.5 133" stroke="#3e78b8" stroke-width="1"/>

<!-- Text to Columns -->
<path d="M780.5 81 Q781 74 787.5 74 Q793 74 793 80" fill="none" stroke="#47709a" stroke-width="2.2"/>
<path d="M789 79 L793 84 L797 79 Z" fill="#47709a"/>
<rect x="768.5" y="82.5" width="15" height="16" fill="#fff" stroke="#6e6e6e" stroke-width="1"/>
<path d="M771 86 H781 M771 88.5 H781 M771 91 H781 M771 93.5 H781 M771 96 H781" stroke="#4f6f8f" stroke-width="1"/>
<rect x="785.5" y="85.5" width="12" height="12.5" fill="#fff" stroke="#7a7a7a" stroke-width="1"/>
<rect x="785" y="85" width="13" height="2.5" fill="#7b8a99"/>
<path d="M785.5 91 H797.5 M785.5 94.5 H797.5 M791.5 87.5 V98" stroke="#8a8a8a" stroke-width="0.9"/>
<!-- Flash Fill -->
<rect x="815" y="72.5" width="27.5" height="23" fill="#fff" stroke="#8a8a8a" stroke-width="1"/>
<path d="M815 78 H842.5 M815 84 H842.5 M815 90 H842.5 M821.5 72.5 V95.5 M836 72.5 V95.5" stroke="#8e8e8e" stroke-width="0.9"/>
<rect x="822" y="78.5" width="13.5" height="5" fill="#eef5f9"/>
<rect x="822" y="84.5" width="13.5" height="11" fill="#dcdcdc"/>
<path d="M838 82 H845 L840.5 90 H844 L833 102.5 L837 92.5 H834 Z" fill="#f3d394"/>
<!-- Remove Duplicates -->
<rect x="864.5" y="74" width="11" height="25.5" fill="#41698f"/>
<rect x="864.5" y="79.5" width="11" height="4.5" fill="#d3c08f"/>
<rect x="864.5" y="89" width="11" height="4.5" fill="#d3c08f"/>
<path d="M876.5 87 H881.5 M879.5 84.8 L882 87 L879.5 89.2" fill="none" stroke="#41698f" stroke-width="1.6"/>
<rect x="884.5" y="74.5" width="10.5" height="24.5" fill="#fff" stroke="#555" stroke-width="1"/>
<rect x="884" y="74" width="11.5" height="5" fill="#41698f"/>
<rect x="884.5" y="79" width="10.5" height="5" fill="#d3c08f"/>
<rect x="884.5" y="84" width="10.5" height="4.5" fill="#f5f0de"/>
<path d="M884.5 88.5 H895 M884.5 93.5 H895" stroke="#777" stroke-width="0.9"/>
<!-- Data Validation -->
<rect x="930.5" y="78.5" width="17" height="6.5" fill="#fff" stroke="#aaa" stroke-width="1"/>
<rect x="930.5" y="90.5" width="17" height="6.5" fill="#fff" stroke="#aaa" stroke-width="1"/>
<path d="M946 81 L950 85.5 L958.5 74.5" fill="none" stroke="#3f8f6b" stroke-width="2.2"/>
<circle cx="951" cy="93.5" r="4.2" fill="#fbe9e3" stroke="#d8826f" stroke-width="1.5"/>
<path d="M948.3 90.8 L953.7 96.2" stroke="#d8826f" stroke-width="1.4"/>
<path d="M971.5 127 L973.5 129 L975.5 127" fill="none" stroke="#555" stroke-width="1"/>
<!-- Consolidate -->
<rect x="998.5" y="74.5" width="10" height="24" fill="#fff" stroke="#666" stroke-width="1"/>
<path d="M998.5 79.5 H1008.5 M998.5 84.5 H1008.5 M998.5 89.5 H1008.5 M998.5 94 H1008.5" stroke="#888" stroke-width="0.9"/>
<path d="M1009.5 86.8 H1016" stroke="#41698f" stroke-width="2"/>
<path d="M1013.5 83.5 L1017.5 86.8 L1013.5 90 Z" fill="#41698f"/>
<rect x="1018.5" y="84.5" width="10" height="4.5" fill="#fdf2ec" stroke="#d8997e" stroke-width="1"/>
<!-- Relationships (disabled) -->
<g fill="#f3f3f3" stroke="#c6c6c6" stroke-width="1">
<rect x="1088.5" y="72.5" width="10" height="10.5"/>
<rect x="1070.5" y="80.5" width="10" height="10.5"/>
<rect x="1085.5" y="87" width="10" height="10.5"/>
</g>
<g fill="#b9b9b9">
<rect x="1088" y="72" width="11" height="2.5"/>
<rect x="1070" y="80" width="11" height="2.5"/>
<rect x="1085" y="86.5" width="11" height="2.5"/>
</g>
<path d="M1081 84 L1088 76.5 M1081 88 L1085 92" stroke="#c6c6c6" stroke-width="1"/>
<path d="M1072.5 86 H1078.5 M1090.5 78 H1096.5 M1087.5 93 H1093.5" stroke="#d0d0d0" stroke-width="0.8"/>
<!-- Manage Data Model -->
<path d="M1144 79.5 Q1144 75 1150 75 H1163 Q1166.5 75 1166.5 78.5 V95.5 L1158 98 Q1150 97.5 1144 96 Z" fill="#6db33f"/>
<path d="M1158 80.5 L1166.5 83.5 V95.5 L1158 98 Z" fill="#c6e9a9"/>
<path d="M1158 85 L1166.5 86.5 M1158 89.5 L1166.5 90 M1158 93.5 L1166.5 93.5 M1162.3 81.8 V96.8" stroke="#5a9a38" stroke-width="0.9"/>
<path d="M1147.5 83.5 L1158 78.5 V98 L1147.5 95" fill="none" stroke="#b9e79c" stroke-width="1.1"/>
<path d="M1150.5 85 V95.5 M1153 89.5 Q1155.5 89.5 1155.5 91.5 Q1155.5 94 1152.5 94" fill="none" stroke="#b9e79c" stroke-width="1.1"/>
<!-- formula bar -->
<path d="M93.5 177.5 H100.5 L97 181 Z" fill="#666"/>
<circle cx="122" cy="174.5" r="0.9" fill="#999"/>
<circle cx="122" cy="179" r="0.9" fill="#999"/>
<circle cx="122" cy="183.5" r="0.9" fill="#999"/>
<path d="M150.5 174.5 L160.5 184.5 M160.5 174.5 L150.5 184.5" stroke="#b9b9b9" stroke-width="1.3"/>
<path d="M186 180 L189.5 184 L197 175" fill="none" stroke="#c4c4c4" stroke-width="1.8"/>
<text x="221" y="185.5" font-family="Liberation Serif" font-style="italic" font-weight="bold" font-size="15" fill="#4a4a4a">f</text>
<text x="227.3" y="186" font-family="Liberation Serif" font-style="italic" font-size="12" fill="#4a4a4a">x</text>
</svg>

</body></html>
